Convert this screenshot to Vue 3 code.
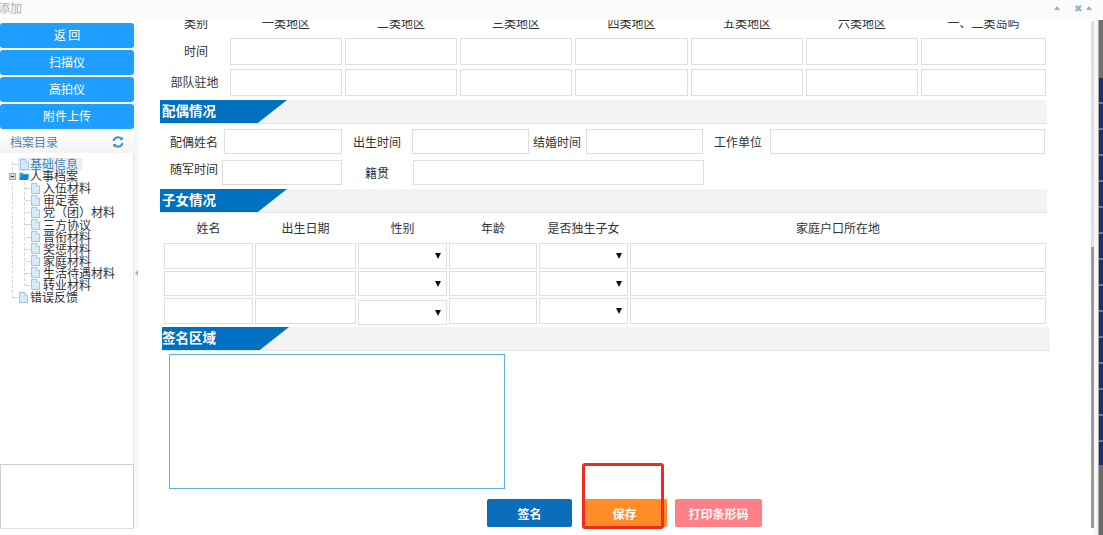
<script setup>
const regions = ['一类地区', '二类地区', '三类地区', '四类地区', '五类地区', '六类地区', '一、二类岛屿']
const regionRows = ['时间', '部队驻地']
const childCols = ['姓名', '出生日期', '性别', '年龄', '是否独生子女', '家庭户口所在地']
const sideButtons = ['返 回', '扫描仪', '高拍仪', '附件上传']
const children = ['入伍材料', '审定表', '党（团）材料', '三方协议', '晋衔材料', '奖惩材料', '家庭材料', '生活待遇材料', '转业材料']
</script>

<template>
  <div class="page">
    <header class="titlebar">
      <span class="title">添加</span>
      <div class="tools">
        <i class="tri"></i>
        <span class="close">✖</span>
        <i class="tri"></i>
      </div>
    </header>

    <div class="body">
      <aside class="side">
        <button v-for="b in sideButtons" :key="b" class="side-btn">{{ b }}</button>
        <div class="side-head">
          <span>档案目录</span>
          <svg width="12" height="12" viewBox="0 0 12 12" fill="none" stroke="#4a93c4" stroke-width="2">
            <path d="M1.5 5A4.6 4.6 0 0 1 9.6 3" />
            <path d="M10.5 7A4.6 4.6 0 0 1 2.4 9" />
            <path d="M10.8 0.6V4H7.4Z" fill="#4a93c4" stroke="none" />
            <path d="M1.2 11.4V8H4.6Z" fill="#4a93c4" stroke="none" />
          </svg>
        </div>
        <div class="tree">
          <i class="vline outer"></i>
          <i class="vline inner"></i>
          <div class="node top">
            <i class="hline"></i>
            <span class="selected">
              <svg class="file" viewBox="0 0 10 12"><path d="M.5.5H6.5L9.5 3.5V11.5H.5Z" fill="#d6eaf8" stroke="#8fc1e3" /><path d="M6.5.5V3.5H9.5" fill="#fff" stroke="#8fc1e3" /></svg>
              <span class="sel-text">基础信息</span>
            </span>
          </div>
          <div class="node top">
            <i class="expander"></i>
            <svg class="folder" viewBox="0 0 11 10"><path d="M.5 1.5H4L5 2.5H10.5V9.5H.5Z" fill="#35a3e8" /><path d="M2.5 4H11L9 9.5H.5Z" fill="#0f86d6" /></svg>
            <span>人事档案</span>
          </div>
          <div v-for="c in children" :key="c" class="node child">
            <i class="hline"></i>
            <svg class="file" viewBox="0 0 10 12"><path d="M.5.5H6.5L9.5 3.5V11.5H.5Z" fill="#d6eaf8" stroke="#8fc1e3" /><path d="M6.5.5V3.5H9.5" fill="#fff" stroke="#8fc1e3" /></svg>
            <span>{{ c }}</span>
          </div>
          <div class="node top">
            <i class="hline"></i>
            <svg class="file" viewBox="0 0 10 12"><path d="M.5.5H6.5L9.5 3.5V11.5H.5Z" fill="#d6eaf8" stroke="#8fc1e3" /><path d="M6.5.5V3.5H9.5" fill="#fff" stroke="#8fc1e3" /></svg>
            <span>错误反馈</span>
          </div>
        </div>
        <div class="side-box"></div>
      </aside>

      <div class="splitter"><i class="split-arrow"></i></div>

      <main class="main">
        <div class="grid-region region-head">
          <span class="label">类别</span>
          <span v-for="r in regions" :key="r" class="cell-text">{{ r }}</span>
        </div>
        <div v-for="(r, i) in regionRows" :key="r" class="grid-region region-row">
          <span class="label" :class="{ tight: i === 1 }">{{ r }}</span>
          <input v-for="n in 7" :key="n" class="field" />
        </div>

        <div class="section first">
          <div class="section-title">配偶情况</div>
        </div>
        <div class="spouse-a">
          <span class="lb pl10">配偶姓名</span><input class="field" />
          <span class="lb pl11">出生时间</span><input class="field" />
          <span class="lb pl4">结婚时间</span><input class="field" />
          <span class="lb pl11">工作单位</span><input class="field" />
        </div>
        <div class="spouse-b">
          <span class="lb pl10 raised">随军时间</span><input class="field" />
          <span class="lb pl23">籍贯</span><input class="field" />
        </div>

        <div class="section first">
          <div class="section-title">子女情况</div>
        </div>
        <div class="child-grid child-head">
          <span v-for="c in childCols" :key="c" class="cell-text">{{ c }}</span>
        </div>
        <div v-for="(h, i) in [26, 25, 26]" :key="i" class="child-grid child-row" :style="{ height: h + 'px' }">
          <input class="field" />
          <input class="field" />
          <div class="select" :class="{ low: i === 2 }"></div>
          <input class="field" />
          <div class="select"></div>
          <input class="field" />
        </div>

        <div class="section sign-section">
          <div class="section-title">签名区域</div>
        </div>
        <div class="sign-box"></div>
        <div class="actions">
          <button class="act sign">签名</button>
          <button class="act save">保存</button>
          <button class="act print">打印条形码</button>
        </div>
      </main>

      <div class="scroll-track"><i class="scroll-thumb"></i></div>
      <div class="gutter"></div>
      <div class="edge"></div>
    </div>

    <div class="annotation"></div>
  </div>
</template>

<style>
html, body { margin: 0; background: #fff; }
</style>

<style scoped>
.page {
  position: relative;
  width: 1103px;
  height: 535px;
  overflow: hidden;
  display: flex;
  flex-direction: column;
  background: #fff;
  font-family: "Noto Sans CJK SC", "Noto Sans", sans-serif;
  font-size: 12px;
  color: #333;
}
.titlebar {
  height: 20px;
  flex: none;
  display: flex;
  justify-content: space-between;
  background: #fbfbfb;
  position: relative;
  z-index: 2;
}
.title { color: #aab0b5; line-height: 15px; margin-left: -2px; }
.tools {
  display: flex;
  align-items: center;
  height: 16px;
  margin-right: 11px;
  width: 38px;
  justify-content: space-between;
}
.tri {
  width: 0;
  height: 0;
  border-left: 3px solid transparent;
  border-right: 3px solid transparent;
  border-bottom: 4px solid #8fb3cc;
}
.close { color: #8fb3cc; font-size: 10px; line-height: 10px; margin-left: 10px; }
.body { flex: 1; display: flex; min-height: 0; }

.side { width: 134px; flex: none; display: flex; flex-direction: column; }
.side-btn {
  height: 25px;
  margin-bottom: 2px;
  padding: 0 0 2px;
  border: 0;
  border-radius: 3px;
  background: #1e9fff;
  color: #fff;
  font: inherit;
  font-size: 12px;
}
.side-btn:first-child { margin-top: 3px; }
.side-head {
  height: 23px;
  margin-top: -1px;
  display: flex;
  align-items: center;
  justify-content: space-between;
  padding: 0 10px;
  background: linear-gradient(#fff, #f3f3f3);
  color: #4f83a8;
}
.tree {
  position: relative;
  height: 311px;
  box-sizing: border-box;
  padding-top: 5px;
  border-right: 1px solid #e4e4e4;
  color: #333;
}
.vline { position: absolute; border-left: 1px dashed #d6d6d6; }
.vline.outer { left: 12px; top: 9px; height: 136px; }
.vline.inner { left: 24px; top: 29px; height: 104px; }
.node { position: relative; height: 12.1px; line-height: 12px; display: flex; align-items: center; white-space: nowrap; }
.node.top { padding-left: 19px; }
.node.child { padding-left: 31px; }
.hline { position: absolute; width: 6px; top: 6px; border-top: 1px dashed #d6d6d6; }
.node.top .hline { left: 13px; }
.node.child .hline { left: 25px; }
.file { width: 9px; height: 11px; margin-right: 3px; flex: none; }
.node.top > .file { margin-right: 2px; }
.folder { width: 10px; height: 10px; margin-right: 1px; flex: none; }
.selected {
  display: flex;
  align-items: center;
  height: 13px;
  margin-left: -1px;
  padding: 0 3px 0 1px;
  background: #eef2f5;
  border: 1px solid #e2e6ea;
  border-radius: 2px;
  box-sizing: border-box;
}
.selected .file { margin-right: 1px; }
.sel-text { color: #3f7fb0; }
.expander {
  position: absolute;
  left: 9px;
  top: 3px;
  width: 7px;
  height: 7px;
  background: #d5d5d5;
  box-sizing: border-box;
  border: 1px solid #aaa;
}
.expander::after {
  content: "";
  position: absolute;
  left: 1px;
  top: 2px;
  width: 3px;
  height: 1px;
  background: #333;
}
.side-box {
  height: 65px;
  box-sizing: border-box;
  border: 1px solid #cfcfcf;
  border-bottom-color: #e2e2e2;
}
.splitter {
  width: 4px;
  flex: none;
  height: 508px;
  background: #f6f6f6;
  position: relative;
}
.split-arrow {
  position: absolute;
  left: 1px;
  top: 250px;
  width: 0;
  height: 0;
  border-top: 3px solid transparent;
  border-bottom: 3px solid transparent;
  border-right: 3px solid #aab4bc;
}

.main { flex: 1; min-width: 0; overflow: hidden; }
.field {
  display: block;
  box-sizing: border-box;
  width: 100%;
  height: 100%;
  margin: 0;
  padding: 0;
  background: #fff;
  border: 1px solid #dedede;
  border-radius: 0;
  outline: 0;
}
.grid-region {
  display: grid;
  grid-template-columns: 67px 112px 112px 112px 113px 112px 112px 125px;
  column-gap: 3px;
  margin-left: 22px;
  width: 886px;
}
.region-head {
  height: 18px;
  margin-top: -6px;
  line-height: 18px;
}
.region-row { height: 27px; margin-top: 4px; }
.region-head + .region-row { margin-top: 6px; }
.label { text-align: center; padding-left: 5px; line-height: 25px; white-space: nowrap; }
.label.tight { padding-left: 2px; }
.region-head .label { line-height: 18px; }
.cell-text { text-align: center; white-space: nowrap; }

.section {
  height: 24px;
  box-sizing: border-box;
  background: #f2f3f5;
  border-bottom: 1px solid #e4e4e4;
}
.section.first { margin: 4px 0 0 22px; width: 887px; }
.section-title {
  width: 127px;
  height: 23px;
  box-sizing: border-box;
  padding-left: 2px;
  background: #0070c0;
  clip-path: polygon(0 0, 100% 0, 77% 100%, 0 100%);
  color: #fff;
  font-weight: 700;
  font-size: 13.5px;
  line-height: 20px;
}
.sign-section { margin: 3px 0 0 24px; width: 888px; }
.sign-section .section-title { padding-left: 0; }

.spouse-a, .spouse-b { display: grid; margin-left: 22px; height: 25px; line-height: 25px; }
.spouse-a { margin-top: 5px; grid-template-columns: 64px 118px 70px 117px 57px 117px 67px 275px; }
.spouse-b { margin-top: 6px; grid-template-columns: 62px 120px 71px 291px; }
.lb { white-space: nowrap; }
.raised { line-height: 17px; }
.pl10 { padding-left: 10px; }
.pl11 { padding-left: 11px; }
.pl4 { padding-left: 4px; }
.pl23 { padding-left: 23px; }

.child-grid {
  display: grid;
  grid-template-columns: 89px 101px 89px 88px 89px 416px;
  column-gap: 2px;
  margin-left: 26px;
}
.child-head { height: 16px; margin-top: 7px; line-height: 16px; margin-bottom: 7px; }
.child-row { margin-bottom: 2px; }
.select {
  position: relative;
  box-sizing: border-box;
  border: 1px solid #dedede;
}
.select.low { margin-top: 2px; margin-bottom: -1px; }
.select::after {
  content: "";
  position: absolute;
  right: 5px;
  top: 50%;
  margin-top: -3px;
  border-left: 3px solid transparent;
  border-right: 3px solid transparent;
  border-top: 6px solid #111;
}
.child-row:last-of-type { margin-bottom: 0; }

.sign-box {
  box-sizing: border-box;
  width: 336px;
  height: 135px;
  margin: 3px 0 0 31px;
  border: 1px solid #5ab4de;
}
.actions {
  display: flex;
  height: 28px;
  margin: 10px 0 0 349px;
}
.act {
  height: 28px;
  padding: 0;
  border: 0;
  border-radius: 2px;
  color: #fff;
  font: inherit;
  font-weight: 700;
  font-size: 12px;
}
.sign { width: 85px; background: #0a6ebd; }
.save { width: 85px; margin-left: 10px; background: #ff8c26; }
.print { width: 87px; margin-left: 8px; background: #ff7f86; }

.scroll-track {
  flex: none;
  align-self: flex-start;
  width: 3px;
  height: 507px;
  margin-top: 1px;
  background: #dfdfdf;
  position: relative;
}
.scroll-thumb {
  position: absolute;
  left: 0;
  right: 0;
  top: 226px;
  bottom: 0;
  background: #999;
}
.gutter { flex: none; width: 4px; margin-top: -20px; background: #f6f6f6; }
.edge {
  flex: none;
  width: 4px;
  margin-top: -20px;
  border-left: 1px solid #aaa;
  box-sizing: content-box;
  background:
    repeating-linear-gradient(transparent 0 24px, #777 24px 26px) 0 78px / 100% 387px no-repeat,
    linear-gradient(#707070 0 78px, #1c2c6e 78px 465px, #6a6a6a 465px);
}

.annotation {
  position: absolute;
  left: 582px;
  top: 463px;
  width: 82px;
  height: 66px;
  box-sizing: border-box;
  border: 3px solid #ef2a1e;
  border-radius: 3px;
  pointer-events: none;
}
</style>
